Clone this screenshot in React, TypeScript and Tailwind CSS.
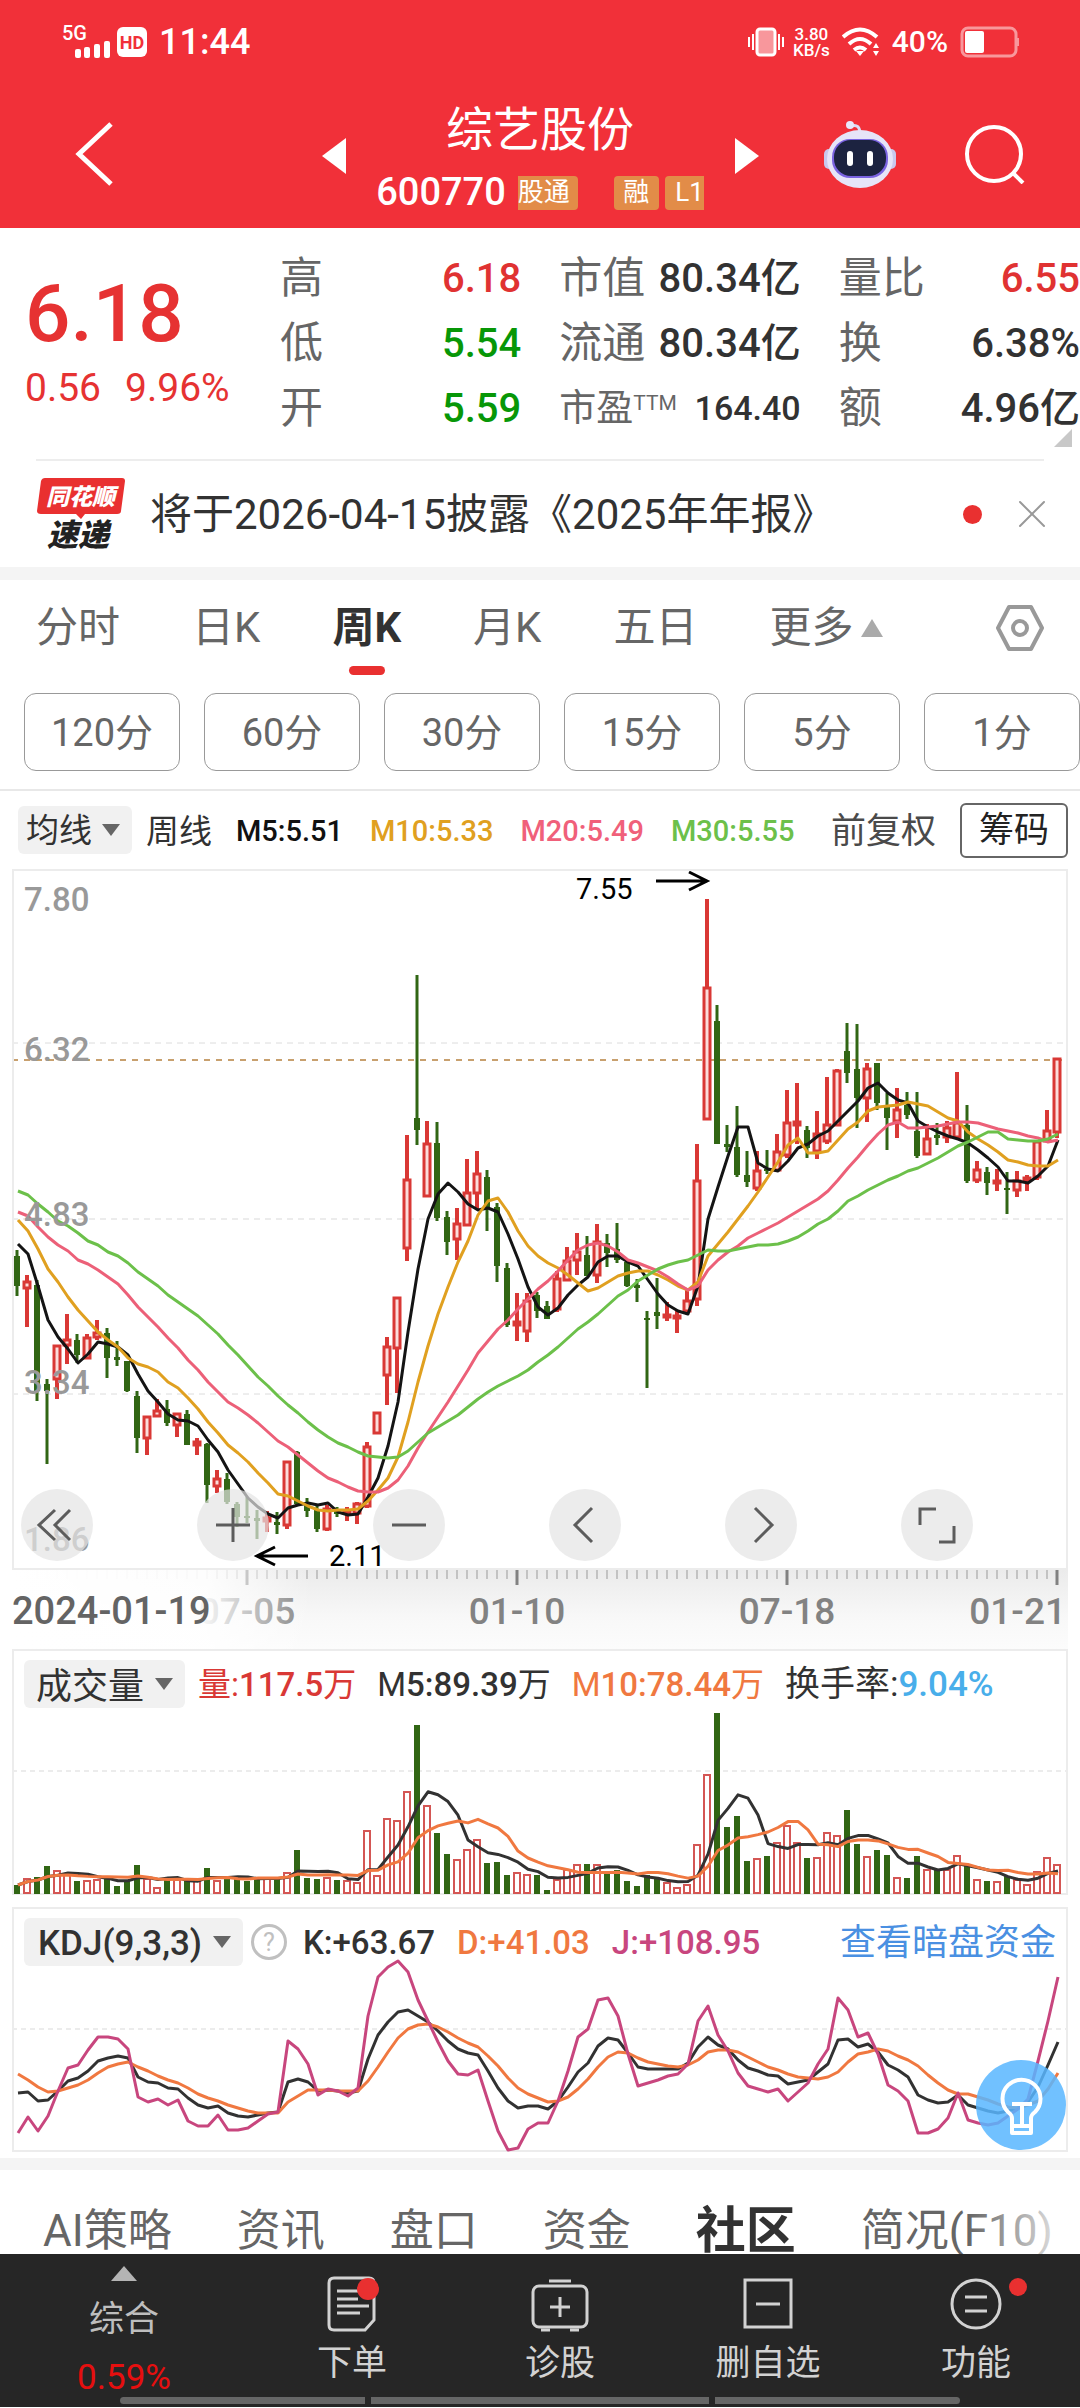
import { useState } from "react";
import { X } from "lucide-react";

// [direction, high, open/close top, open/close bottom, low] in chart units
type Candle = ["u" | "d", number, number, number, number];

const candles: Candle[] = [
  ["d", 381, 387, 417, 427], ["u", 406, 412, 420, 458], ["d", 411, 416, 522, 532], ["d", 510, 515, 522, 595],
  ["u", 476, 476, 511, 530], ["u", 445, 470, 477, 495], ["d", 465, 471, 486, 494], ["u", 465, 468, 490, 490],
  ["u", 451, 463, 469, 471], ["d", 459, 464, 489, 509], ["d", 472, 488, 491, 497], ["d", 492, 492, 522, 523],
  ["d", 522, 527, 569, 584], ["u", 547, 547, 570, 586], ["u", 530, 541, 548, 548], ["d", 531, 540, 554, 557],
  ["u", 544, 544, 557, 568], ["d", 541, 545, 576, 576], ["u", 569, 572, 577, 586], ["d", 574, 575, 616, 634],
  ["u", 601, 609, 618, 624], ["d", 604, 610, 633, 635], ["d", 633, 635, 648, 658], ["d", 628, 647, 649, 654],
  ["d", 641, 649, 652, 670], ["u", 642, 648, 653, 663], ["d", 643, 653, 656, 665], ["u", 592, 592, 657, 660],
  ["d", 582, 583, 635, 636], ["d", 629, 636, 642, 648], ["d", 637, 641, 660, 663], ["u", 636, 639, 661, 662],
  ["d", 638, 641, 645, 648], ["u", 638, 641, 645, 652], ["u", 633, 634, 645, 655], ["u", 573, 577, 638, 639],
  ["u", 543, 543, 565, 565], ["u", 468, 477, 507, 536], ["u", 428, 428, 480, 524], ["u", 266, 310, 380, 392],
  ["d", 106, 249, 261, 276], ["u", 252, 274, 328, 328], ["d", 253, 274, 349, 352], ["d", 342, 348, 373, 386],
  ["u", 339, 354, 371, 391], ["u", 290, 323, 357, 357], ["u", 282, 304, 325, 340], ["d", 301, 308, 338, 362],
  ["d", 334, 338, 397, 413], ["d", 394, 399, 456, 458], ["u", 424, 452, 457, 472], ["u", 424, 431, 463, 473],
  ["d", 423, 426, 442, 449], ["d", 432, 437, 450, 450], ["u", 402, 409, 441, 443], ["u", 378, 391, 412, 412],
  ["u", 364, 382, 392, 406], ["d", 367, 386, 407, 407], ["u", 355, 372, 407, 414], ["d", 365, 374, 384, 398],
  ["d", 354, 380, 391, 394], ["d", 392, 393, 417, 418], ["d", 410, 416, 419, 433], ["d", 442, 449, 451, 519],
  ["d", 409, 443, 447, 460], ["u", 433, 445, 449, 452], ["u", 442, 446, 450, 464], ["u", 421, 431, 443, 444],
  ["u", 275, 311, 431, 437], ["u", 30, 118, 251, 251], ["d", 136, 152, 275, 275], ["d", 256, 275, 278, 283],
  ["d", 237, 278, 306, 308], ["d", 282, 306, 313, 318], ["u", 282, 301, 320, 322], ["d", 281, 300, 302, 305],
  ["u", 265, 282, 302, 302], ["u", 221, 253, 287, 289], ["u", 214, 252, 257, 275], ["d", 257, 261, 279, 289],
  ["u", 242, 264, 283, 290], ["u", 208, 255, 273, 275], ["u", 200, 201, 257, 257], ["d", 154, 182, 204, 214],
  ["d", 155, 200, 229, 259], ["u", 194, 199, 230, 253], ["d", 194, 194, 234, 241], ["d", 224, 236, 249, 281],
  ["u", 219, 240, 253, 269], ["d", 223, 236, 246, 250], ["d", 223, 262, 287, 289], ["u", 255, 269, 286, 286],
  ["d", 254, 266, 269, 276], ["u", 252, 258, 269, 274], ["u", 203, 253, 269, 270], ["d", 236, 256, 312, 314],
  ["u", 292, 300, 312, 314], ["d", 298, 303, 314, 326], ["u", 300, 311, 313, 322], ["d", 303, 319, 321, 345],
  ["u", 302, 311, 322, 328], ["u", 306, 308, 311, 322], ["u", 272, 272, 309, 311], ["u", 241, 261, 273, 273],
  ["u", 189, 189, 264, 269],
];

const ma5 = [
  375, 385, 417, 451, 468, 480, 494, 485, 473, 475, 478, 486, 505, 522, 533, 545, 551, 552, 557, 571, 583, 601, 615,
  629, 638, 645, 649, 639, 636, 634, 636, 634, 643, 646, 645, 628, 609, 577, 533, 463, 400, 350, 325, 314, 323, 335,
  341, 339, 343, 365, 390, 418, 438, 446, 439, 426, 416, 408, 393, 387, 387, 393, 397, 411, 425, 436, 442, 445, 417,
  350, 318, 287, 258, 258, 294, 300, 302, 292, 279, 275, 267, 262, 252, 242, 232, 219, 214, 224, 231, 234, 252, 258,
  263, 267, 270, 274, 281, 289, 298, 312, 312, 314, 307, 297, 271,
];
const ma10 = [
  351, 362, 380, 400, 413, 428, 441, 452, 463, 471, 478, 489, 495, 498, 503, 513, 519, 529, 540, 553, 564, 576, 584,
  593, 604, 614, 625, 627, 632, 637, 641, 642, 641, 641, 640, 632, 621, 609, 588, 553, 513, 477, 445, 418, 393, 372,
  346, 332, 329, 343, 362, 377, 387, 394, 399, 406, 414, 422, 419, 413, 407, 404, 402, 402, 406, 411, 417, 421, 413,
  387, 375, 363, 350, 337, 323, 308, 293, 276, 269, 284, 284, 282, 271, 260, 253, 242, 238, 237, 236, 233, 235, 237,
  243, 249, 252, 263, 270, 276, 283, 291, 293, 296, 297, 297, 291,
];
const ma20 = [
  343, 347, 358, 368, 376, 382, 391, 395, 401, 408, 415, 426, 438, 448, 458, 469, 479, 491, 501, 513, 523, 533, 539,
  546, 554, 563, 572, 578, 586, 594, 602, 609, 613, 618, 622, 623, 623, 619, 611, 597, 579, 563, 548, 533, 517, 501,
  484, 472, 460, 451, 440, 430, 420, 412, 402, 391, 381, 376, 374, 377, 383, 391, 394, 398, 402, 408, 415, 421, 417,
  401, 391, 383, 377, 369, 364, 359, 354, 348, 342, 336, 330, 322, 311, 299, 288, 276, 265, 256, 253, 259, 259, 258,
  257, 255, 253, 253, 254, 257, 260, 262, 264, 267, 269, 273, 271,
];
const ma30 = [
  322, 326, 335, 343, 352, 357, 364, 372, 376, 383, 387, 394, 403, 410, 417, 426, 433, 440, 447, 456, 465, 476, 486,
  497, 508, 517, 527, 536, 544, 553, 561, 568, 574, 578, 583, 587, 588, 589, 588, 582, 573, 564, 558, 552, 546, 538,
  530, 523, 517, 512, 507, 501, 493, 486, 478, 469, 460, 453, 445, 436, 427, 421, 412, 406, 400, 396, 393, 391, 386,
  381, 382, 382, 380, 378, 376, 376, 375, 372, 368, 362, 355, 350, 342, 332, 327, 321, 316, 311, 307, 302, 299, 294,
  289, 283, 277, 273, 268, 263, 263, 270, 271, 272, 272, 270, 265,
];

const volumes = [
  9, 16, 17, 28, 24, 20, 13, 14, 15, 16, 8, 13, 29, 16, 7, 15, 15, 13, 14, 26, 14, 16, 16, 13, 17, 16, 16, 22, 44, 16,
  15, 17, 14, 14, 12, 64, 19, 76, 74, 103, 169, 89, 61, 40, 35, 45, 55, 31, 32, 19, 22, 20, 19, 4, 15, 25, 30, 30, 30,
  21, 24, 13, 8, 19, 15, 12, 7, 10, 50, 120, 181, 67, 78, 33, 36, 38, 52, 69, 52, 36, 37, 62, 59, 84, 50, 38, 44, 39,
  17, 16, 38, 25, 24, 25, 39, 28, 15, 13, 13, 18, 15, 10, 23, 37, 30,
];

const kLine = [
  186, 185, 194, 193, 184, 174, 171, 164, 154, 151, 149, 151, 170, 175, 176, 181, 182, 191, 198, 201, 199, 206, 209,
  210, 208, 206, 205, 175, 172, 175, 184, 183, 184, 186, 184, 152, 128, 115, 105, 103, 109, 115, 124, 134, 142, 146,
  148, 164, 181, 194, 201, 199, 199, 202, 194, 180, 165, 156, 139, 131, 133, 146, 160, 162, 162, 162, 162, 156, 140,
  130, 138, 142, 153, 161, 164, 168, 169, 177, 175, 173, 165, 157, 133, 132, 140, 137, 145, 158, 163, 170, 188, 193,
  196, 195, 188, 198, 201, 204, 206, 204, 201, 195, 180, 158, 135,
];
const dLine = [
  167, 173, 180, 185, 184, 181, 178, 173, 166, 160, 157, 155, 160, 164, 169, 173, 176, 181, 187, 191, 194, 198, 201,
  204, 206, 206, 206, 195, 189, 183, 183, 183, 184, 184, 184, 174, 160, 145, 131, 122, 118, 117, 120, 125, 131, 136,
  140, 149, 159, 171, 181, 187, 191, 195, 194, 190, 182, 172, 160, 150, 145, 146, 151, 155, 157, 159, 160, 158, 153,
  145, 143, 143, 145, 150, 155, 160, 163, 167, 170, 171, 172, 170, 165, 155, 147, 145, 142, 144, 149, 153, 159, 168,
  176, 183, 187, 187, 190, 193, 197, 200, 201, 198, 194, 182, 166,
];
const jLine = [
  226, 210, 224, 209, 184, 161, 158, 143, 130, 130, 132, 142, 190, 195, 192, 198, 193, 214, 219, 219, 208, 223, 223,
  221, 214, 207, 205, 134, 142, 157, 188, 182, 184, 189, 181, 109, 70, 60, 54, 65, 93, 114, 135, 154, 167, 168, 163,
  194, 224, 243, 241, 222, 216, 216, 194, 164, 130, 122, 93, 91, 109, 147, 179, 176, 173, 169, 167, 157, 114, 99, 128,
  144, 166, 179, 182, 185, 182, 194, 185, 176, 157, 142, 91, 103, 130, 126, 147, 178, 184, 194, 226, 226, 222, 211,
  186, 213, 216, 218, 216, 209, 202, 192, 154, 114, 70,
];

const STEP = 10;
const UP = "#d93835";
const DOWN = "#316614";

const xAt = (i: number) => 5 + i * STEP;
const toPoints = (ys: number[]) => ys.map((y, i) => `${xAt(i) + 1},${y}`).join(" ");

function average(values: number[], size: number) {
  return values.map((_, i) => {
    const part = values.slice(Math.max(0, i - size + 1), i + 1);
    return 245 - part.reduce((a, b) => a + b, 0) / part.length;
  });
}

function Line({ ys, color }: { ys: number[]; color: string }) {
  return <polyline points={toPoints(ys)} fill="none" stroke={color} strokeWidth="3" strokeLinejoin="round" />;
}

const quotes = [
  { label: "高", value: "6.18", color: "text-[#e03232]" },
  { label: "低", value: "5.54", color: "text-[#079707]" },
  { label: "开", value: "5.59", color: "text-[#079707]" },
  { label: "市值", value: "80.34亿", color: "text-[#323232]" },
  { label: "流通", value: "80.34亿", color: "text-[#323232]" },
  { label: "市盈", sup: "TTM", value: "164.40", color: "text-[#323232]" },
  { label: "量比", value: "6.55", color: "text-[#e03232]" },
  { label: "换", value: "6.38%", color: "text-[#323232]" },
  { label: "额", value: "4.96亿", color: "text-[#323232]" },
];

const periods = ["分时", "日K", "周K", "月K", "五日"];
const minutes = ["120分", "60分", "30分", "15分", "5分", "1分"];
const sections = ["AI策略", "资讯", "盘口", "资金", "社区", "简况(F10)"];

function StatusBar() {
  return (
    <div className="flex h-[84px] items-center pl-[62px] pr-[60px] font-medium">
      <svg viewBox="0 0 48 36" className="h-9 w-12 overflow-visible" fill="#fff">
        <text x="0" y="16" fontSize="20">5G</text>
        <rect x="13" y="25" width="6" height="9" rx="2" />
        <rect x="22" y="23" width="6" height="11" rx="2" />
        <rect x="32" y="20" width="6" height="14" rx="2" />
        <rect x="42" y="17" width="6" height="17" rx="2" />
      </svg>
      <span className="ml-[7px] flex h-[30px] w-[30px] items-center justify-center rounded-md bg-white text-[18px] font-bold text-[#f13039]">
        HD
      </span>
      <span className="ml-3 text-[36px] leading-none">11:44</span>

      <svg viewBox="0 0 38 30" className="ml-auto h-[30px] w-[38px]" fill="none" stroke="#fff" strokeWidth="3">
        <rect x="10" y="2" width="18" height="26" rx="3" fill="#f8979c" />
        <path d="M2 10v10M6 7v16M32 7v16M36 10v10" strokeWidth="2" />
      </svg>
      <span className="ml-2 text-center text-[17px] leading-4">
        3.80
        <br />
        KB/s
      </span>
      <svg viewBox="0 0 38 30" className="ml-3 h-[30px] w-[38px]" fill="none" stroke="#fff" strokeWidth="4">
        <path d="M1 10Q18-5 35 10M7 17Q18 7 29 17M12 23Q18 18 24 23" />
        <path d="M14 24h8l-4 5z" fill="#fff" stroke="none" />
        <path d="M31 21l3-5 3 5zM31 24h6l-3 5z" fill="#fff" stroke="none" />
      </svg>
      <span className="ml-3 text-[30px] leading-none">40%</span>
      <svg viewBox="0 0 60 32" className="ml-3 h-8 w-[60px]" fill="none">
        <rect x="2" y="2" width="54" height="28" rx="6" stroke="#f8979c" strokeWidth="3" />
        <rect x="5" y="5" width="19" height="22" rx="2" fill="#fff" />
        <path d="M58 12v8" stroke="#f8979c" strokeWidth="2" />
      </svg>
    </div>
  );
}

function RobotIcon() {
  return (
    <svg viewBox="0 0 72 68" className="h-[68px] w-[72px]">
      <path d="M27 6c6-2 9 1 9 8" fill="none" stroke="#dcdcf5" strokeWidth="3" />
      <circle cx="26" cy="5" r="4" fill="#e8e8fb" />
      <rect x="0" y="29" width="10" height="20" rx="5" fill="#c9c8ee" />
      <rect x="62" y="29" width="10" height="20" rx="5" fill="#c9c8ee" />
      <ellipse cx="36" cy="39" rx="33" ry="29" fill="#e6e4f8" />
      <rect x="8" y="19" width="56" height="39" rx="18" fill="#7a63e0" />
      <rect x="10" y="20" width="52" height="36" rx="17" fill="#1c2340" />
      <rect x="23" y="31" width="6" height="15" rx="3" fill="#fff" />
      <rect x="43" y="31" width="6" height="15" rx="3" fill="#fff" />
    </svg>
  );
}

function Header() {
  return (
    <header className="bg-[#f13039] text-white">
      <StatusBar />
      <div className="grid h-36 grid-cols-[1fr_437px_1fr] items-center">
        <button aria-label="返回" className="ml-[75px] w-10 pb-1">
          <svg viewBox="0 0 40 68" className="h-[68px] w-10" fill="none" stroke="#fff" strokeWidth="5">
            <path d="M36 4L4 34l32 30" />
          </svg>
        </button>
        <div className="flex items-center justify-between">
          <button aria-label="上一只">
            <svg viewBox="0 0 24 36" className="h-9 w-6" fill="#fff">
              <path d="M24 0v36L0 18z" />
            </svg>
          </button>
          <div className="flex flex-col items-center gap-[15px] pt-0.5">
            <h1 className="text-[47px] leading-[56px]">综艺股份</h1>
            <div className="flex h-10 items-center text-[26px]">
              <span className="text-[38px] font-medium">600770</span>
              <span className="ml-3 flex h-[34px] w-[60px] items-center rounded-r bg-[#e28c48]">股通</span>
              <span className="ml-9 flex h-[34px] w-[45px] items-center justify-center rounded bg-[#e28c48]">融</span>
              <span className="ml-1.5 flex h-[34px] w-[39px] items-center justify-end rounded-l bg-[#e28c48]">L1</span>
            </div>
          </div>
          <button aria-label="下一只">
            <svg viewBox="0 0 24 36" className="h-9 w-6" fill="#fff">
              <path d="M0 0v36l24-18z" />
            </svg>
          </button>
        </div>
        <div className="flex items-center justify-end gap-[68px] pr-[54px] pb-1">
          <button aria-label="智能助手">
            <RobotIcon />
          </button>
          <button aria-label="搜索">
            <svg viewBox="0 0 62 60" className="h-[60px] w-[62px]" fill="none" stroke="#fff" strokeWidth="4">
              <circle cx="30" cy="30" r="27" />
              <path d="M49 49l10 10" />
            </svg>
          </button>
        </div>
      </div>
    </header>
  );
}

function QuotePanel() {
  return (
    <section className="flex pt-[18px]">
      <div className="w-[280px] shrink-0 pl-[25px] pt-7 font-medium text-[#e63232]">
        <p className="text-[80px] leading-20">6.18</p>
        <p className="mt-2 flex gap-6 text-[39px] leading-[52px] font-normal">
          <span>0.56</span>
          <span>9.96%</span>
        </p>
      </div>
      <dl className="grid grow grid-flow-col grid-cols-3 grid-rows-3 gap-x-[38px]">
        {quotes.map((q) => (
          <div key={q.label} className="flex h-[65px] items-center justify-between whitespace-nowrap">
            <dt className={q.sup ? "flex text-[37px] text-[#666]" : "text-[43px] text-[#666]"}>
              {q.label}
              {q.sup && <sup className="top-0 pt-3 text-[21px] leading-none">{q.sup}</sup>}
            </dt>
            <dd className={`${q.color} font-medium ${q.sup ? "text-[34px]" : "text-[40px]"}`}>{q.value}</dd>
          </div>
        ))}
      </dl>
    </section>
  );
}

function NewsBar() {
  return (
    <div>
      <div className="flex h-[18px] items-start justify-end pr-2">
        <svg viewBox="0 0 18 18" className="-mt-3 h-[18px] w-[18px]" fill="#c8c8c8">
          <path d="M18 0v18H0z" />
        </svg>
      </div>
      <div className="mx-9 flex h-[108px] items-center border-t-2 border-[#ededed]">
        <svg viewBox="0 0 90 76" className="h-[76px] w-[90px] overflow-visible">
          <path d="M9 2h77q3 0 3 3l-4 30q0 3-4 3H49l-4 5-5-5H5q-4 0-4-3L5 5q1-3 4-3z" fill="#e93030" />
          <text x="10" y="29" fontSize="23" fontWeight="900" fontStyle="italic" fill="#fff">同花顺</text>
          <text x="11" y="70" fontSize="31" fontWeight="900" fontStyle="italic" fill="#222">速递</text>
        </svg>
        <a href="#notice" className="ml-6 text-[42px] text-[#323232]">
          将于2026-04-15披露《2025年年报》
        </a>
        <span className="ml-auto h-[19px] w-[19px] rounded-full bg-[#e93030]" />
        <button aria-label="关闭" className="-mr-3 ml-[26px]">
          <X className="h-12 w-12 text-[#999]" strokeWidth={1} />
        </button>
      </div>
    </div>
  );
}

function PeriodTabs() {
  const [active, setActive] = useState("周K");

  return (
    <nav className="border-b-2 border-[#e8e8e8] pb-[18px]">
      <div className="flex h-[95px] items-center gap-[72px] pl-9 pr-9 text-[42px] text-[#666]">
        {periods.map((p) => (
          <button
            key={p}
            onClick={() => setActive(p)}
            className={`relative h-full ${p === active ? "font-bold text-[#323232]" : ""}`}
          >
            {p}
            {p === active && (
              <span className="absolute bottom-0 left-1/2 h-[9px] w-9 -translate-x-1/2 rounded-full bg-[#e93030]" />
            )}
          </button>
        ))}
        <button className="flex h-full items-center gap-2">
          更多
          <svg viewBox="0 0 22 18" className="h-[18px] w-[22px]" fill="#aaa">
            <path d="M11 0l11 18H0z" />
          </svg>
        </button>
        <button aria-label="设置" className="ml-auto">
          <svg viewBox="0 0 48 46" className="h-[46px] w-12" fill="none" stroke="#999" strokeWidth="4">
            <path d="M13 2h22l11 21-11 21H13L2 23z" strokeLinejoin="round" />
            <circle cx="24" cy="23" r="7" strokeWidth="4" />
          </svg>
        </button>
      </div>
      <div className="flex gap-6 pl-6 pt-[18px]">
        {minutes.map((m) => (
          <button key={m} className="h-[78px] flex-1 rounded-xl border border-[#999] pt-0.5 text-[38px] text-[#666]">
            {m}
          </button>
        ))}
      </div>
    </nav>
  );
}

function IndicatorSelect({ name, label, className }: { name: string; label: string; className: string }) {
  return (
    <span className="relative inline-flex items-center">
      <select
        aria-label={name}
        className={`h-12 appearance-none rounded-md bg-[#f1f1f1] pr-10 text-[#323232] ${className}`}
      >
        <option>{label}</option>
      </select>
      <svg viewBox="0 0 18 12" className="pointer-events-none absolute right-3 h-3 w-[18px]" fill="#666">
        <path d="M0 0h18L9 12z" />
      </svg>
    </span>
  );
}

function AverageLegend() {
  return (
    <div className="flex h-[78px] items-center pl-[18px] pr-3 text-[29px] font-medium whitespace-nowrap">
      <IndicatorSelect name="主图指标" label="均线" className="pl-2 text-[33px] font-normal" />
      <span className="ml-3.5 pt-1 text-[33px] font-normal text-[#323232]">周线</span>
      <span className="ml-6 pt-1 text-[#111]">M5:5.51</span>
      <span className="ml-[27px] pt-1 text-[#e0a020]">M10:5.33</span>
      <span className="ml-[27px] pt-1 text-[#f0607a]">M20:5.49</span>
      <span className="ml-[27px] pt-1 text-[#6cc04a]">M30:5.55</span>
      <button className="ml-auto pt-1 text-[35px] font-normal text-[#4a4a4a]">前复权</button>
      <button className="ml-6 h-[55px] w-[108px] rounded-md border-2 border-[#666] text-[35px] leading-none font-normal text-[#222]">
        筹码
      </button>
    </div>
  );
}

const priceLabels = [
  { y: 42, text: "7.80" },
  { y: 192, text: "6.32" },
  { y: 357, text: "4.83" },
  { y: 525, text: "3.34" },
  { y: 682, text: "1.86" },
];
const dateLabels = [
  { x: 235, anchor: "middle", text: "07-05" },
  { x: 505, anchor: "middle", text: "01-10" },
  { x: 775, anchor: "middle", text: "07-18" },
  { x: 1054, anchor: "end", text: "01-21" },
] as const;

const chartTools = [
  { name: "快退", d: "M34 21L18 36l16 15M49 21L34 36l15 15" },
  { name: "放大", d: "M36 19v34M19 36h34" },
  { name: "缩小", d: "M19 36h34" },
  { name: "左移", d: "M43 19L26 36l17 17" },
  { name: "右移", d: "M30 19l17 17-17 17" },
  { name: "全屏", d: "M19 36V20h16M53 37v16H38" },
];

function PriceChart() {
  return (
    <div className="relative mx-3">
      <svg viewBox="0 0 1056 780" className="block w-full">
        <defs>
          <linearGradient id="axis" x1="0" y1="0" x2="0" y2="1">
            <stop offset="0" stopColor="#ebebeb" />
            <stop offset="0.6" stopColor="#f8f8f8" />
            <stop offset="1" stopColor="#fcfcfc" />
          </linearGradient>
          <linearGradient id="fade">
            <stop offset="0" stopColor="#fff" />
            <stop offset="0.65" stopColor="#fff" stopOpacity="0.9" />
            <stop offset="1" stopColor="#fff" stopOpacity="0" />
          </linearGradient>
        </defs>

        <g stroke="#dcdcdc" strokeDasharray="6 5">
          <path d="M0 174H1055M0 525H1055" strokeWidth="1" />
          <path d="M0 350H1055" stroke="#ececec" strokeWidth="2" />
        </g>
        <path d="M0 191H1055" stroke="#c8a06e" strokeWidth="2" strokeDasharray="6 6" />

        {candles.map(([dir, high, top, bottom, low], i) =>
          dir === "u" ? (
            <g key={i} stroke={UP}>
              <path d={`M${xAt(i)} ${high}V${top}M${xAt(i)} ${bottom}V${low}`} strokeWidth="4" />
              <rect x={xAt(i) - 3} y={top + 1} width="6" height={Math.max(2, bottom - top - 2)} fill="#fbdcda" strokeWidth="3" />
            </g>
          ) : (
            <g key={i} fill={DOWN}>
              <path d={`M${xAt(i)} ${high}V${low}`} stroke={DOWN} strokeWidth="3" />
              <rect x={xAt(i) - 3} y={top} width="6" height={bottom - top} />
            </g>
          ),
        )}
        <Line ys={ma5} color="#141414" />
        <Line ys={ma10} color="#e0a020" />
        <Line ys={ma20} color="#ec6078" />
        <Line ys={ma30} color="#6cc04a" />

        <g fontSize="33" fontWeight="500" fill="#999">
          {priceLabels.map((l) => (
            <text key={l.text} x="12" y={l.y}>{l.text}</text>
          ))}
        </g>
        <g fontSize="29" fill="#000">
          <text x="564" y="30">7.55</text>
          <text x="317" y="697">2.11</text>
        </g>
        <path d="M644 12H694M677 3l18 9-18 9M296 687H246M263 678l-18 9 18 9" fill="none" stroke="#000" strokeWidth="3" />

        <rect x="0" y="701" width="1056" height="79" fill="url(#axis)" />
        {candles.map((_, i) => {
          const major = i % 27 === 23;
          return (
            <path
              key={i}
              d={`M${xAt(i)} 701v${major ? 15 : 9}`}
              stroke={major ? "#828282" : "#999"}
              strokeWidth={major ? 3 : 1}
            />
          );
        })}
        <g fontSize="37" fontWeight="500" fill="#828282">
          {dateLabels.map((l) => (
            <text key={l.text} x={l.x} y="755" textAnchor={l.anchor}>{l.text}</text>
          ))}
        </g>
        <rect x="0" y="701" width="300" height="79" fill="url(#fade)" />
        <text x="0" y="755" fontSize="38" fontWeight="500" fill="#646464">2024-01-19</text>
        <rect x="1" y="1" width="1054" height="699" fill="none" stroke="#ececec" strokeWidth="2" />
      </svg>

      <div className="absolute top-[620px] left-[9px] flex gap-[104px]">
        {chartTools.map((t) => (
          <button key={t.name} aria-label={t.name} className="h-[72px] w-[72px] rounded-full bg-[#e4e4e4]/70">
            <svg viewBox="0 0 72 72" fill="none" stroke="#5c5c5c" strokeWidth="3">
              <path d={t.d} />
            </svg>
          </button>
        ))}
      </div>
    </div>
  );
}

function VolumeChart() {
  return (
    <section className="mx-3 grid bg-white">
      <svg viewBox="0 0 1056 246" className="col-start-1 row-start-1 block w-full">
        <rect x="1" y="1" width="1054" height="244" fill="none" stroke="#ececec" strokeWidth="2" />
        <path d="M0 122H1055" stroke="#ececec" strokeWidth="2" strokeDasharray="5 4" />
        {volumes.map((h, i) =>
          candles[i][0] === "u" ? (
            <rect key={i} x={xAt(i) - 3} y={246 - h} width="6" height={h - 2} fill="#fff" stroke="#d45654" strokeWidth="2" />
          ) : (
            <rect key={i} x={xAt(i) - 3} y={245 - h} width="6" height={h} fill={DOWN} />
          ),
        )}
        <Line ys={average(volumes, 5)} color="#323232" />
        <Line ys={average(volumes, 10)} color="#f07840" />
      </svg>
      <div className="z-10 col-start-1 row-start-1 flex h-[70px] items-center gap-[21px] pl-3 text-[33px] whitespace-nowrap">
        <IndicatorSelect name="副图指标一" label="成交量" className="pl-3 text-[36px]" />
        <span className="-ml-2 pt-0.5 text-[#d93835]">量:<b className="font-medium">117.5</b>万</span>
        <span className="pt-0.5 text-[#323232]">M<b className="font-medium">5:89.39</b>万</span>
        <span className="pt-0.5 text-[#f07840]">M<b className="font-medium">10:78.44</b>万</span>
        <span className="pt-0.5 text-[35px] text-[#323232]">
          换手率:<b className="font-medium text-[#48aeea]">9.04%</b>
        </span>
      </div>
    </section>
  );
}

function KdjChart() {
  return (
    <section className="relative mx-3 mt-3 grid">
      <svg viewBox="0 0 1056 245" className="col-start-1 row-start-1 block w-full">
        <rect x="1" y="1" width="1054" height="243" fill="none" stroke="#ececec" strokeWidth="2" />
        <path d="M0 122H1055" stroke="#ececec" strokeWidth="2" strokeDasharray="5 4" />
        <Line ys={kLine} color="#323232" />
        <Line ys={dLine} color="#f07840" />
        <Line ys={jLine} color="#c8467e" />
      </svg>
      <div className="z-10 col-start-1 row-start-1 flex h-[70px] items-center pl-3 pr-3 text-[33px] font-medium whitespace-nowrap">
        <IndicatorSelect name="副图指标二" label="KDJ(9,3,3)" className="pl-3.5 text-[35px]" />
        <button
          aria-label="指标说明"
          className="ml-2 h-9 w-9 rounded-full border-3 border-[#c0c0c0] text-[25px] leading-none font-normal text-[#c0c0c0]"
        >
          ?
        </button>
        <span className="ml-4 pt-0.5 text-[#323232]">K:+63.67</span>
        <span className="ml-[22px] pt-0.5 text-[#f07840]">D:+41.03</span>
        <span className="ml-[22px] pt-0.5 text-[#c8467e]">J:+108.95</span>
        <a href="#dark-pool" className="ml-auto pt-0.5 text-[36px] font-normal text-[#4a90e2]">
          查看暗盘资金
        </a>
      </div>
      <button aria-label="智能解读" className="absolute right-0.5 bottom-0.5 z-10 h-[90px] w-[90px] rounded-full bg-[#58b6ff]/85">
        <svg viewBox="0 0 90 90" fill="none" stroke="#fff" strokeWidth="4" strokeLinejoin="round">
          <path d="M36 73V58q0-3-4-6a19 19 0 1 1 27 0q-4 3-4 6v15zM36 66h19M36 44h20M46 44v20" />
        </svg>
      </button>
    </section>
  );
}

function SectionTabs() {
  return (
    <nav className="relative flex h-[84px] items-end gap-[65px] bg-white pl-[43px] text-[44px] leading-[46px] whitespace-nowrap text-[#666]">
      {sections.map((s) => (
        <button key={s} className={s === "社区" ? "text-[50px] font-bold text-[#323232]" : ""}>
          {s}
        </button>
      ))}
      <span className="pointer-events-none absolute inset-y-0 right-0 w-28 bg-linear-to-r from-white/0 to-white" />
    </nav>
  );
}

const actions = [
  {
    label: "下单",
    icon: (
      <>
        <path d="M6 2h35q5 0 5 5v37L37 54H6q-5 0-5-5V7q0-5 5-5z" />
        <path d="M9 15h21M9 23h21M9 30h32M9 37h23" />
        <circle cx="40" cy="13" r="11" fill="#e93030" stroke="none" />
      </>
    ),
  },
  {
    label: "诊股",
    icon: (
      <>
        <rect x="-3" y="10" width="54" height="41" rx="6" />
        <path d="M13 5h22M24 21v20M14 31h20M5 54h9M34 54h9" />
      </>
    ),
  },
  { label: "删自选", icon: <path d="M1 4h46v47H1zM12 28h24" /> },
  {
    label: "功能",
    icon: (
      <>
        <circle cx="24" cy="28" r="24" />
        <path d="M13 21h22M13 35h22" />
        <circle cx="66" cy="11" r="9" fill="#e93030" stroke="none" />
      </>
    ),
  },
];

function BottomBar() {
  return (
    <footer className="relative bg-[#262626] text-[35px] text-[#d2d2d2]">
      <div className="flex h-[143px] leading-[44px]">
        <button className="flex w-[248px] flex-col items-center pt-3">
          <svg viewBox="0 0 26 15" className="h-[15px] w-[26px] shrink-0" fill="#b4b4b4">
            <path d="M13 0l13 15H0z" />
          </svg>
          <span className="mt-[17px] text-[#bebebe]">综合</span>
          <span className="mt-[18px] leading-9 text-[#e60f0f]">0.59%</span>
        </button>
        {actions.map((a) => (
          <button key={a.label} className="flex flex-1 flex-col items-center pt-[22px]">
            <svg viewBox="0 0 48 58" className="h-[58px] w-12 overflow-visible" fill="none" stroke="#d2d2d2" strokeWidth="3">
              {a.icon}
            </svg>
            <span className="mt-2">{a.label}</span>
          </button>
        ))}
      </div>
      <div className="mx-[120px] flex h-[10px] gap-1.5">
        <span className="h-[7px] w-[245px] rounded-l-full bg-[#666]" />
        <span className="h-[7px] grow bg-[#666]" />
        <span className="h-[7px] w-[245px] rounded-r-full bg-[#666]" />
      </div>
    </footer>
  );
}

export default function App() {
  return (
    <main className="min-h-screen overflow-hidden bg-white font-['Roboto','Noto_Sans_CJK_SC',sans-serif]">
      <Header />
      <QuotePanel />
      <NewsBar />
      <div className="h-[13px] bg-[#f4f4f4]" />
      <PeriodTabs />
      <AverageLegend />
      <PriceChart />
      <VolumeChart />
      <KdjChart />
      <div className="mt-1.5 h-3 bg-[#f4f4f4]" />
      <SectionTabs />
      <BottomBar />
    </main>
  );
}
